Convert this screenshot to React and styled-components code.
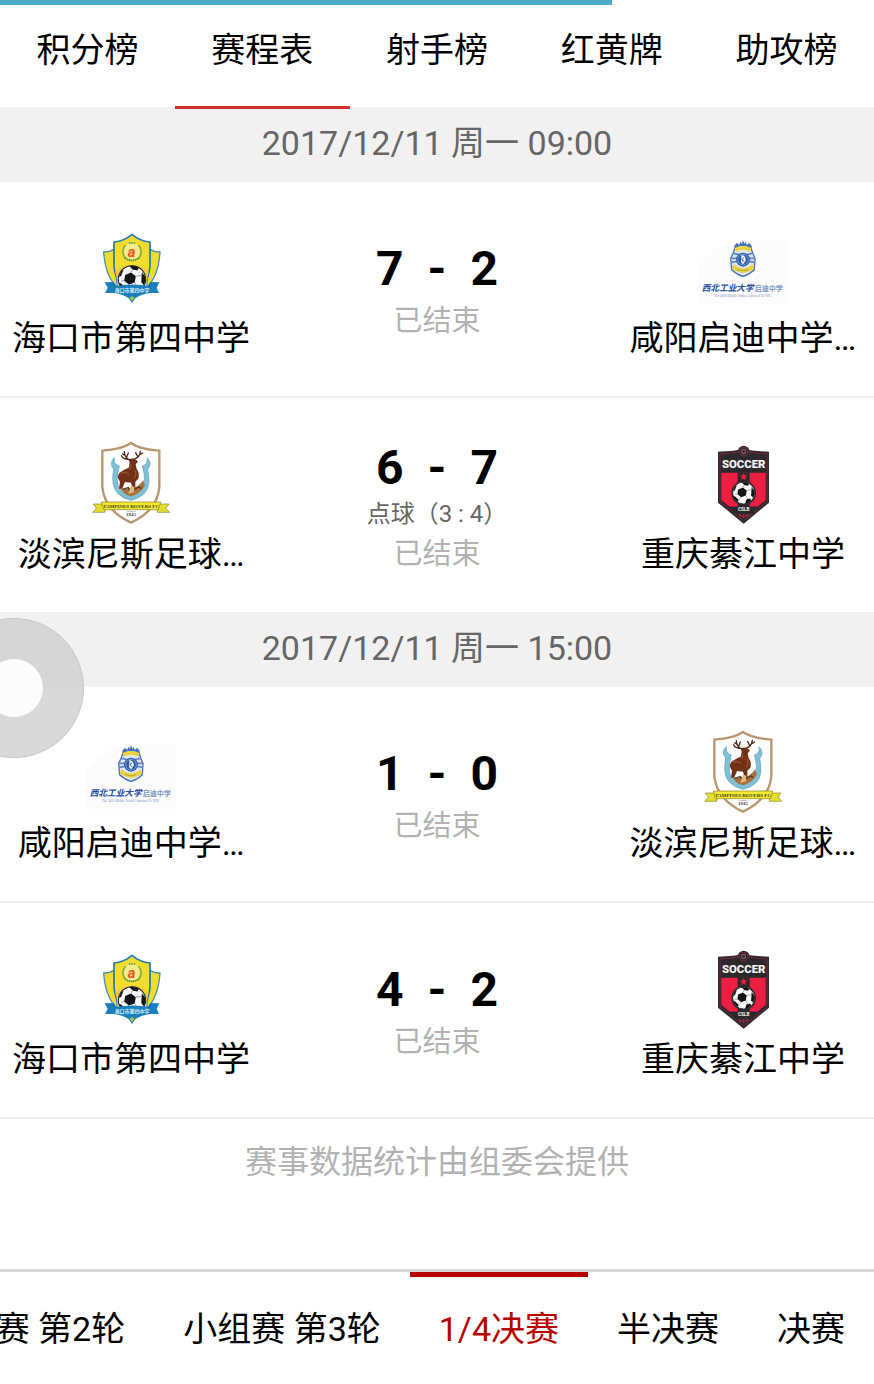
import React from "react";
import styled, { createGlobalStyle } from "styled-components";

//------------------------------- STYLES -------------------------

const GlobalStyle = createGlobalStyle`
    * {
        box-sizing: border-box;
    }
    body {
        margin: 0;
        background-color: #fff;
        color: #000;
        font-family: Roboto, "Noto Sans CJK SC", sans-serif;
        font-size: 34px;
    }
`

const Page = styled.div`
    display: flex;
    flex-direction: column;
    min-height: 100vh;
    overflow: hidden;
`

const PlainButton = styled.button`
    margin: 0;
    padding: 0;
    border: none;
    background: none;
    color: inherit;
    font: inherit;
    cursor: pointer;
`

const Progress = styled.div`
    width: 70%;
    height: 5px;
    background-color: #4bacc6;
`

const TopTabs = styled.nav`
    position: relative;
    z-index: 1;
    display: flex;
    height: 104px;
`

const TopTab = styled(PlainButton)`
    flex: 1;
    padding-bottom: 12px;
    line-height: 48px;
    border-bottom: 3px solid ${(props) => (props.$active ? "#d32f2f" : "transparent")};
`

// pulled up over the line of whatever stands above it
const DateBar = styled.h2`
    margin: -2px 0 0;
    height: 75px;
    line-height: 72px;
    text-align: center;
    font-size: 34px;
    font-weight: 400;
    color: #666;
    background-color: #f1f1f1;
`

const MatchRow = styled.article`
    display: grid;
    grid-template-columns: 3fr 4fr 3fr;
    align-items: center;
    height: 216px;
    border-bottom: 2px solid #eee;
`

const Team = styled.div`
    display: flex;
    flex-direction: column;
    align-items: center;
    padding-top: 8px;
`

const Logo = styled.svg`
    width: 90px;
    height: 90px;
`

const TeamName = styled.span`
    line-height: 50px;
    white-space: nowrap;
`

const Result = styled.div`
    display: flex;
    flex-direction: column;
    align-items: center;
`

const Score = styled.div`
    display: flex;
    gap: 24px;
    line-height: 64px;
    font-size: 48px;
    font-weight: 700;
`

const Penalty = styled.div`
    margin-bottom: 6px;
    line-height: 28px;
    font-size: 24px;
    color: #666;
`

const Status = styled.div`
    line-height: 40px;
    font-size: 29px;
    color: #b2b2b2;
`

const Note = styled.p`
    margin: 0;
    padding: 19px 0;
    line-height: 48px;
    text-align: center;
    font-size: 32px;
    color: #b2b2b2;
`

const RoundTabs = styled.nav`
    display: flex;
    justify-content: flex-end;
    height: 115px;
    margin-top: auto;
    border-top: 3px solid #d5d7d7;
`

const RoundTab = styled(PlainButton)`
    flex: none;
    padding: 0 29px 4px;
    line-height: 48px;
    white-space: nowrap;
    color: ${(props) => (props.$active ? "#b80000" : "#000")};
    border-top: 5px solid ${(props) => (props.$active ? "#b80000" : "transparent")};
`

// floats over the list, half hidden behind the left edge
const FloatButton = styled(PlainButton)`
    position: fixed;
    left: -56px;
    top: 618px;
    display: grid;
    place-items: center;
    width: 140px;
    height: 140px;
    border: 1px solid #c6c6c6;
    border-radius: 50%;
    background-color: rgba(204, 204, 204, 0.75);
`

const FloatDot = styled.span`
    width: 58px;
    height: 58px;
    border-radius: 50%;
    background-color: #fcfcfc;
`

//------------------------------- LOGOS -------------------------

function Ball({ x, y, r }) {
    return (
        <g transform={`translate(${x} ${y}) scale(${r / 40})`}>
            <circle r="40" fill="#fafafa" stroke="#222" strokeWidth="3" />
            <g fill="#141414">
                <path d="M-20 -13 L-3 -20 L11 -9 L8 9 L-9 15 L-23 4 Z" />
                <path d="M-8 -39 Q8 -41 20 -34 L16 -26 L2 -29 Z" />
                <path d="M29 -21 L38 -9 Q41 6 35 18 L27 8 Z" />
                <path d="M10 24 L24 20 L27 28 Q18 38 5 39 Z" />
                <path d="M-31 13 L-19 24 L-20 34 Q-34 26 -38 10 Z" />
                <path d="M-31 -25 L-25 -27 L-32 -10 L-39 -7 Z" />
            </g>
            <path
                d="M-3 -20 L2 -29 M11 -9 L29 -12 M8 9 L15 22 M-9 15 L-19 24 M-23 4 L-32 5"
                stroke="#777"
                strokeWidth="2"
            />
        </g>
    )
}

function HaikouLogo() {
    return (
        <Logo viewBox="18 -3 270 270" aria-hidden="true">
            <path d="M71 84 Q88 85 101 76 L112 190 Q76 158 71 84 Z" fill="#efdc2e" stroke="#4b92b0" strokeWidth="4" />
            <path d="M240 84 Q224 85 211 76 L200 190 Q235 158 240 84 Z" fill="#efdc2e" stroke="#4b92b0" strokeWidth="4" />
            <path
                d="M156 31 Q179 51 210 54 L210 128 Q204 184 156 213 Q108 184 102 128 L102 54 Q133 51 156 31 Z"
                fill="#f2dc2c"
                stroke="#267bb4"
                strokeWidth="5"
            />
            <path d="M106 142 Q156 102 206 142 L199 174 L113 174 Z" fill="#f5c843" />
            <circle cx="156" cy="83" r="25" fill="#f5ea8c" />
            <path d="M136 63 Q121 84 137 104 M176 63 Q191 84 175 104" fill="none" stroke="#86ab4a" strokeWidth="5" />
            <path d="M147 57 H166" fill="none" stroke="#56a16b" strokeWidth="5" strokeDasharray="5 2" />
            <text x="155" y="98" textAnchor="middle" fontSize="44" fontStyle="italic" fontWeight="700" fill="#e35827">a</text>
            <path d="M135 102 Q156 116 177 102" fill="none" stroke="#4c9750" strokeWidth="6" strokeDasharray="4 2" />
            <Ball x={156} y={166} r={41} />
            <path
                d="M74 175 L102 174 L106 186 Q156 177 206 186 L210 174 L238 175 L230 191 L237 207 L211 207 Q181 211 166 223 L156 237 L146 223 Q131 211 101 207 L75 207 L83 191 Z"
                fill="#1c7fbd"
            />
            <path d="M99 178 L106 188 L104 205 M213 178 L206 188 L208 205" fill="none" stroke="#125f98" strokeWidth="3" />
            <text x="156" y="204" textAnchor="middle" fontSize="15" fontWeight="700" fill="#d9f0f8">海口市第四中学</text>
            <path d="M156 216 L164 222 L156 231 L148 222 Z" fill="#9cc24a" />
        </Logo>
    )
}

function QidiLogo() {
    return (
        <Logo viewBox="21 -18 270 270" aria-hidden="true">
            <path d="M108 34 H297 V226 H21 V107 Z" fill="#fcfcfd" />
            <path d="M130 50 L137 42 L145 47 L148 38 L152 44 L156 34 L160 44 L164 38 L167 47 L175 42 L182 50 L180 62 H132 Z" fill="#4a72b6" />
            <path
                d="M132 56 Q156 42 180 56 L186 74 L192 88 L190 122 Q176 136 156 142 Q136 136 122 122 L119 88 L126 74 Z"
                fill="#dce7f6"
                stroke="#4a72b6"
                strokeWidth="4"
            />
            <path d="M131 57 Q156 45 181 57 L178 68 Q156 57 134 68 Z" fill="#ecd33c" />
            <path d="M128 73 L144 77 M184 73 L168 77 M121 100 L138 97 M191 100 L174 97 M122 88 L140 88 M190 88 L172 88" stroke="#6686bf" strokeWidth="5" />
            <circle cx="156" cy="92" r="21" fill="#2f5cab" />
            <circle cx="156" cy="92" r="16" fill="none" stroke="#9fb7df" strokeWidth="2" />
            <path d="M151 78 Q166 80 164 96 L156 106 Q147 100 151 91 Z" fill="#f5f8fd" />
            <path d="M158 86 L153 93 L160 98" fill="none" stroke="#2f5cab" strokeWidth="3" />
            <path d="M127 106 Q156 130 185 106 L189 118 Q177 129 156 132 Q135 129 123 118 Z" fill="#ead13e" />
            <path d="M139 121 Q156 129 173 121" fill="none" stroke="#8a8556" strokeWidth="3" strokeDasharray="4 3" />
            <text x="32" y="187" fontSize="26" fontStyle="italic" fontWeight="700" fill="#244f9e">西北工业大学</text>
            <text x="191" y="187" fontSize="21" fontWeight="700" fill="#7e98c6">启迪中学</text>
            <text x="155" y="204" textAnchor="middle" fontSize="10" fill="#7690c0" fontFamily="Liberation Serif, serif">
                The QiDi Middle School Attached To NPU
            </text>
        </Logo>
    )
}

function TampinesLogo() {
    return (
        <Logo viewBox="18 30 270 270" aria-hidden="true">
            <path
                d="M153 42 Q179 61 238 65 L238 175 Q231 245 153 281 Q75 245 67 175 L67 65 Q126 61 153 42 Z"
                fill="#fff"
                stroke="#b9966e"
                strokeWidth="7"
            />
            <path
                d="M103 85 Q86 104 101 120 Q92 169 111 191 Q127 208 153 214 Q181 207 196 190 Q213 169 203 121 Q218 104 201 86 Q205 106 187 111 Q201 158 185 180 Q174 194 153 201 Q129 194 119 179 Q105 158 118 111 Q99 106 103 85 Z"
                fill="#7fc0d6"
                stroke="#5b9fba"
                strokeWidth="2"
            />
            <path d="M119 173 Q137 186 149 176 Q171 181 190 153 L194 171 Q181 194 153 202 Q129 197 119 173 Z" fill="#a9703d" />
            <path
                d="M147 92 Q155 86 165 91 L174 97 L170 103 L167 106 L170 120 Q180 132 175 149 L166 158 L166 181 L158 181 L153 161 L135 159 L127 178 L117 180 L120 158 Q107 143 120 130 Q136 119 146 116 L149 103 Z"
                fill="#713117"
            />
            <path d="M122 133 Q136 126 146 136 M152 108 L149 122 M165 124 Q171 137 163 147" fill="none" stroke="#9c5226" strokeWidth="4" />
            <path
                d="M151 93 Q134 88 133 68 M140 84 L145 72 M136 80 L128 74 M161 91 Q180 86 181 67 M174 84 L167 71 M178 78 L188 72 M147 92 Q127 90 125 80"
                fill="none"
                stroke="#4c2517"
                strokeWidth="4"
                strokeLinecap="round"
            />
            <path d="M128 181 L145 176 L151 189 L163 181 L177 174 L184 179" fill="none" stroke="#4f3a28" strokeWidth="4" />
            <path d="M153 169 L163 174 L162 190 L145 194 Z" fill="#e4b77e" />
            <path d="M40 225 H75 V250 H38 L49 238 Z M267 225 H232 V250 H269 L258 238 Z" fill="#e6dc2e" stroke="#8b8630" strokeWidth="2" />
            <path d="M64 219 H242 L235 242 H71 Z" fill="#f4eb30" stroke="#858025" strokeWidth="2" />
            <text x="153" y="236" textAnchor="middle" fontSize="15" fontWeight="700" fill="#3b3b21" fontFamily="Liberation Serif, serif">
                TAMPINES ROVERS FC
            </text>
            <text x="153" y="250" textAnchor="middle" fontSize="8" fill="#555" fontFamily="Liberation Serif, serif">Founded</text>
            <text x="153" y="262" textAnchor="middle" fontSize="15" fontWeight="700" fill="#444" fontFamily="Liberation Serif, serif">1945</text>
        </Logo>
    )
}

function SoccerLogo() {
    return (
        <Logo viewBox="-9 15 270 270" aria-hidden="true">
            <circle cx="128" cy="53" r="18" fill="#2c292d" />
            <path d="M128 44 Q151 51 204 53 V206 L128 269 L51 206 V53 Q105 51 128 44 Z" fill="#2c292d" />
            <path d="M57 60 Q105 57 128 50 Q151 57 198 60 V203 L128 261 L57 203 Z" fill="none" stroke="#9b2741" strokeWidth="2" />
            <circle cx="128" cy="53" r="13" fill="#2c292d" stroke="#a52f45" strokeWidth="2" />
            <path d="M123 47 H133 V58 H123 Z" fill="none" stroke="#b98b92" strokeWidth="2" />
            <path d="M61 116 H194 V198 L169 218 H86 L61 198 Z" fill="#ec1f43" />
            <path d="M110 115 H146 V220 H110 Z M92 218 H164 L158 238 H98 Z" fill="#2c292d" />
            <text x="128" y="103" textAnchor="middle" fontSize="34" fontWeight="900" fill="#f5f3f3">SOCCER</text>
            <path d="M128 117 L131 124 L139 125 L133 130 L135 138 L128 134 L121 138 L123 130 L117 125 L125 124 Z" fill="#ec1f43" />
            <circle cx="128" cy="177" r="37" fill="#2c292d" />
            <Ball x={128} y={177} r={33} />
            <text x="128" y="232" textAnchor="middle" fontSize="14" fontWeight="700" fill="#f5f3f3">CSLB</text>
            <path d="M114 241 L121 248 M128 240 V252 M142 241 L135 248" stroke="#a72b43" strokeWidth="5" />
        </Logo>
    )
}

//------------------------------- DATA -------------------------

const teams = {
    haikou: { name: "海口市第四中学", Logo: HaikouLogo },
    qidi: { name: "咸阳启迪中学…", Logo: QidiLogo },
    tampines: { name: "淡滨尼斯足球…", Logo: TampinesLogo },
    qijiang: { name: "重庆綦江中学", Logo: SoccerLogo },
}

const days = [
    {
        date: "2017/12/11 周一 09:00",
        matches: [
            { home: "haikou", away: "qidi", score: [7, 2] },
            { home: "tampines", away: "qijiang", score: [6, 7], penalty: "3 : 4" },
        ],
    },
    {
        date: "2017/12/11 周一 15:00",
        matches: [
            { home: "qidi", away: "tampines", score: [1, 0] },
            { home: "haikou", away: "qijiang", score: [4, 2] },
        ],
    },
]

const tabs = ["积分榜", "赛程表", "射手榜", "红黄牌", "助攻榜"]
const rounds = ["小组赛 第2轮", "小组赛 第3轮", "1/4决赛", "半决赛", "决赛"]

//-------------------------------------------------------------------

function TeamCell({ id }) {
    const team = teams[id]
    return (
        <Team>
            <team.Logo />
            <TeamName>{team.name}</TeamName>
        </Team>
    )
}

function Match({ match }) {
    return (
        <MatchRow>
            <TeamCell id={match.home} />
            <Result>
                <Score>
                    <span>{match.score[0]}</span>
                    <span>-</span>
                    <span>{match.score[1]}</span>
                </Score>
                {match.penalty && <Penalty>点球（{match.penalty}）</Penalty>}
                <Status>已结束</Status>
            </Result>
            <TeamCell id={match.away} />
        </MatchRow>
    )
}

export default function App() {
    const [tab, setTab] = React.useState("赛程表")
    const [round, setRound] = React.useState("1/4决赛")

    return (
        <Page>
            <GlobalStyle />
            <Progress />
            <TopTabs>
                {tabs.map((name) => (
                    <TopTab key={name} $active={name === tab} onClick={() => setTab(name)}>{name}</TopTab>
                ))}
            </TopTabs>
            <main>
                {days.map((day) => (
                    <section key={day.date}>
                        <DateBar>{day.date}</DateBar>
                        {day.matches.map((match) => (
                            <Match key={match.home} match={match} />
                        ))}
                    </section>
                ))}
                <Note>赛事数据统计由组委会提供</Note>
            </main>
            <RoundTabs>
                {rounds.map((name) => (
                    <RoundTab key={name} $active={name === round} onClick={() => setRound(name)}>{name}</RoundTab>
                ))}
            </RoundTabs>
            <FloatButton aria-label="菜单">
                <FloatDot />
            </FloatButton>
        </Page>
    )
}
